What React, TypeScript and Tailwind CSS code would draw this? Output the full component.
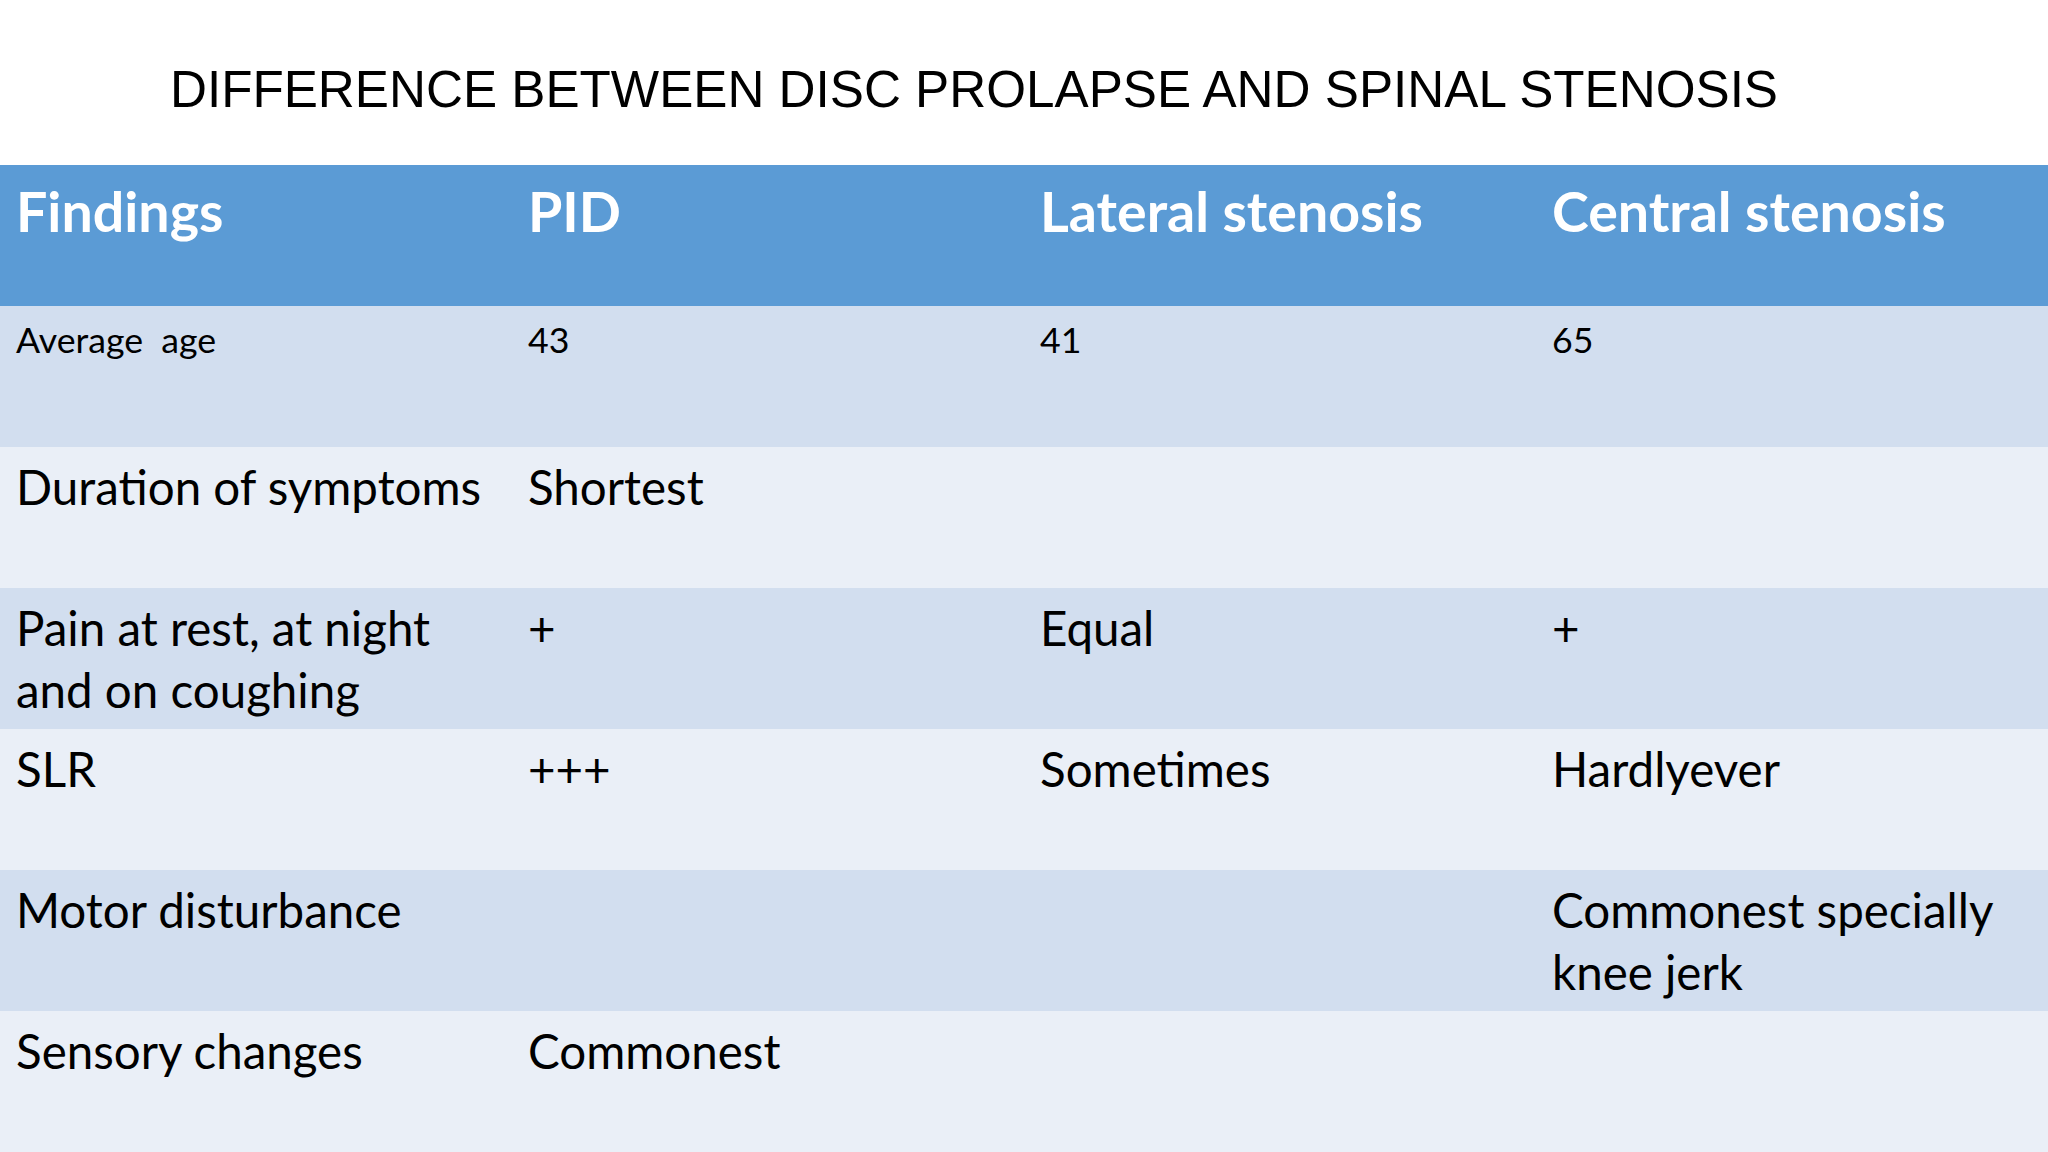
type Row = { cells: string[]; small?: boolean };

const headers = ["Findings", "PID", "Lateral stenosis", "Central stenosis"];

const rows: Row[] = [
  { cells: ["Average  age", "43", "41", "65"], small: true },
  { cells: ["Duration of symptoms", "Shortest", "", ""] },
  { cells: ["Pain at rest, at night and on coughing", "+", "Equal", "+"] },
  { cells: ["SLR", "+++", "Sometimes", "Hardlyever"] },
  { cells: ["Motor disturbance", "", "", "Commonest specially knee jerk"] },
  { cells: ["Sensory changes", "Commonest", "", ""] },
];

export default function App() {
  return (
    <div className="flex h-[1152px] w-[2048px] flex-col overflow-hidden bg-white">
      <div className="h-[165px] shrink-0 pl-[170px] pt-[60px]">
        <h1 className="whitespace-nowrap font-['Liberation_Sans',Arial,sans-serif] text-[51.2px] leading-[60px] text-black">
          DIFFERENCE BETWEEN DISC PROLAPSE AND SPINAL STENOSIS
        </h1>
      </div>
      <div className="grid grid-cols-4 bg-[#5b9bd5]">
        {headers.map((h) => (
          <div
            key={h}
            className="h-[141px] px-4 pt-[11px] font-['Lato',sans-serif] text-[55.5px] font-bold leading-[70px] text-white"
          >
            {h}
          </div>
        ))}
      </div>
      {rows.map((row, i) => (
        <div key={i} className={`grid h-[141px] grid-cols-4 ${i % 2 === 0 ? "bg-[#d2deef]" : "bg-[#eaeff7]"}`}>
          {row.cells.map((c, j) => (
            <div
              key={j}
              className={
                row.small
                  ? "whitespace-pre-wrap px-4 pt-[12px] font-['Lato',sans-serif] text-[35.7px] leading-[44px] text-black"
                  : "whitespace-pre-wrap px-4 pt-[9px] font-['Lato',sans-serif] text-[47.5px] leading-[62px] text-black"
              }
            >
              {c}
            </div>
          ))}
        </div>
      ))}
    </div>
  );
}
